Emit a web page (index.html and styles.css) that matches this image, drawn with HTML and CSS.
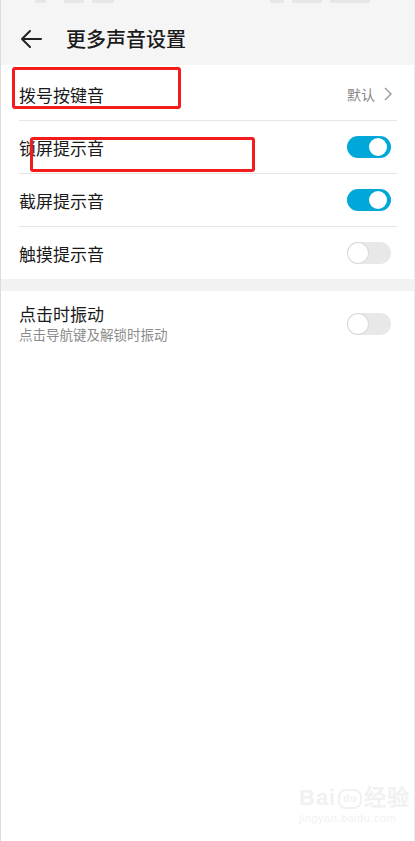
FILE: index.html
```html
<!DOCTYPE html>
<html lang="zh-CN">
<head>
  <meta charset="UTF-8">
  <title>更多声音设置</title>
  <meta name="viewport" content="width=device-width, initial-scale=1.0">
  <link rel="stylesheet" href="styles.css">
</head>
<body>
  <div class="page">
    <div class="header">
      <div class="status">
        <span class="s1"></span><span class="s2"></span><span class="s3"></span>
        <span class="grow"></span>
        <span class="s4"></span><span class="s5"></span><span class="s6"></span>
      </div>
      <div class="bar">
        <svg class="back" width="22" height="18" viewBox="0 0 22 18">
          <path d="M21 9H2M10 1L2 9l8 8" fill="none" stroke="#222" stroke-width="2" stroke-linecap="round" stroke-linejoin="round"/>
        </svg>
        <h1>更多声音设置</h1>
      </div>
    </div>

    <div class="list">
      <div class="item">
        <span class="label">拨号按键音</span>
        <span class="value">默认
          <svg width="8" height="14" viewBox="0 0 8 14"><path d="M1 1l6 6-6 6" fill="none" stroke="#999" stroke-width="1.4"/></svg>
        </span>
      </div>
      <div class="item">
        <span class="label">锁屏提示音</span>
        <span class="switch on"></span>
      </div>
      <div class="item">
        <span class="label">截屏提示音</span>
        <span class="switch on"></span>
      </div>
      <div class="item last">
        <span class="label">触摸提示音</span>
        <span class="switch"></span>
      </div>
    </div>

    <div class="gap"></div>

    <div class="list">
      <div class="item tall last">
        <div class="texts">
          <span class="label">点击时振动</span>
          <span class="sub">点击导航键及解锁时振动</span>
        </div>
        <span class="switch"></span>
      </div>
    </div>

    <div class="mark mark-dial"></div>
    <div class="mark mark-lock"></div>

    <div class="watermark">
      <div class="wm-logo">Bai<span class="paw">du</span>经验</div>
      <div class="wm-url">jingyan.baidu.com</div>
    </div>
  </div>
</body>
</html>
```

FILE: styles.css
```css
* { box-sizing: border-box; }
body {
  margin: 0; padding: 0;
  font-family: "Noto Sans CJK SC", "Noto Sans", sans-serif;
  background: #fff;
}
.page {
  position: relative;
  width: 415px; height: 841px;
  border-left: 1px solid #dcdcdc;
  border-right: 1px solid #ececec;
  overflow: hidden;
}
.header {
  height: 65px;
  background: #f5f5f5;
}
.status {
  display: flex; gap: 8px;
  height: 12px; padding: 0 44px 0 34px;
}
.status span { height: 3px; background: #e6e6e6; border-radius: 0 0 2px 2px; }
.status .s1 { width: 11px; }
.status .s2 { width: 20px; margin-left: 10px; }
.status .s3 { width: 22px; }
.status .grow { flex: 1; background: none; }
.status .s4 { width: 14px; }
.status .s5 { width: 30px; }
.status .s6 { width: 40px; }
.bar {
  display: flex; align-items: center;
  height: 53px; padding-left: 19px;
}
.back { display: block; }
h1 {
  margin: 0 0 0 24px;
  font-size: 20px; font-weight: 500; color: #1a1a1a;
}
.list { padding: 3px 17px 0 18px; }
.gap + .list { padding-top: 0; }
.item {
  display: flex; align-items: center; justify-content: space-between;
  height: 53px;
  border-bottom: 1px solid #e5e5e5;
}
.item.last { border-bottom: none; height: 52px; }
.item.tall { height: 64px; padding-top: 1px; }
.label { font-size: 17px; color: #1a1a1a; }
.texts { display: flex; flex-direction: column; }
.texts .label { line-height: 22px; }
.sub { font-size: 13.5px; color: #8c8c8c; line-height: 19px; }
.value {
  display: flex; align-items: center; gap: 9px;
  font-size: 14px; color: #888;
  margin-right: 5px;
}
.switch {
  position: relative;
  width: 44px; height: 22px;
  margin-right: 6px;
  border-radius: 11px;
  background: #e8e8e8;
}
.switch::after {
  content: "";
  position: absolute; top: 1px; left: 1px;
  width: 20px; height: 20px;
  border-radius: 50%;
  background: #fff;
  box-shadow: 0 0 0 1px #dadada;
}
.switch.on { background: #00a8da; }
.switch.on::after { left: 22px; top: 2px; width: 18px; height: 18px; box-shadow: none; }
.gap {
  height: 12px;
  background: #f2f2f2;
}
.mark {
  position: absolute;
  border: 3px solid #f21c1c;
  border-radius: 3px;
}
.mark-dial { left: 11px; top: 67px; width: 169px; height: 42px; }
.mark-lock { left: 29px; top: 137px; width: 225px; height: 35px; }
.watermark {
  position: absolute; left: 298px; top: 786px;
  color: #f1f1f1;
  font-family: "Liberation Sans", sans-serif;
}
.wm-logo { font-size: 22px; font-weight: bold; line-height: 24px; letter-spacing: 1px; }
.paw {
  display: inline-block;
  font-size: 10px; line-height: 16px;
  padding: 0 3px; margin: 0 2px;
  border: 2px solid #f1f1f1; border-radius: 8px;
  vertical-align: middle;
}
.wm-url { font-size: 11px; margin-top: 2px; letter-spacing: 0.5px; }
```
